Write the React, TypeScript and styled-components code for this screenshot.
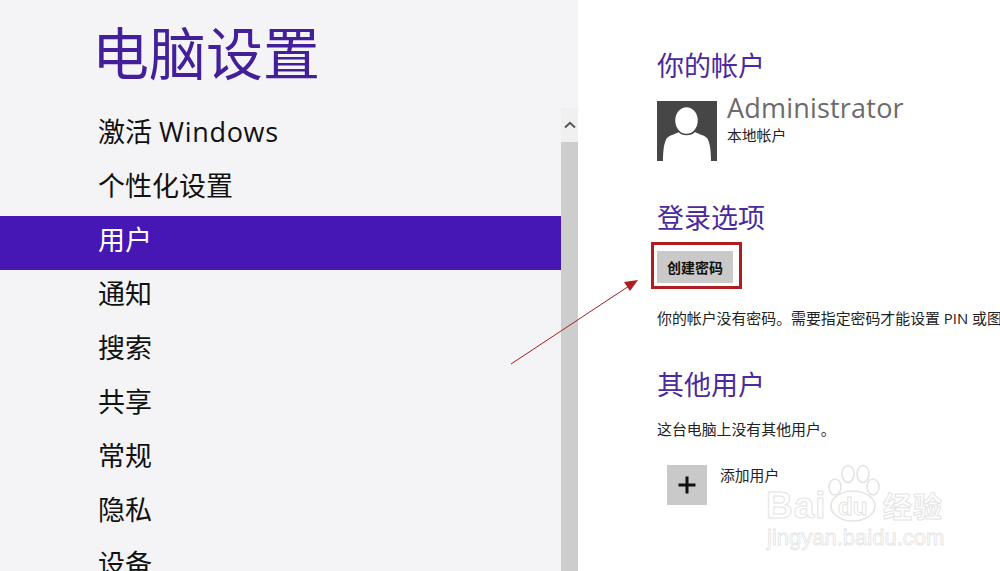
import React from "react";
import styled, { createGlobalStyle } from "styled-components";

const Global = createGlobalStyle`
  html, body { margin: 0; padding: 0; background: #fff; }
  body { font-family: "Open Sans", "Noto Sans CJK SC", sans-serif; }
  #root { width: 1000px; height: 571px; overflow: hidden; }
`;
const Page = styled.div`
  position: relative; display: flex; width: 1000px; height: 571px; overflow: hidden; background: #fff;
`;
const Sidebar = styled.aside`
  width: 578px; flex: none; height: 571px; background: #f4f4f6; display: flex; flex-direction: column; overflow: hidden;
`;
const Title = styled.h1`
  margin: 0; height: 108px; box-sizing: border-box; padding-left: 92px; font-size: 57px; line-height: 106px; font-weight: 400; color: #43209a;
`;
const NavArea = styled.div`display: flex; flex: 1; min-height: 0;`;
const NavList = styled.ul`
  list-style: none; margin: 0; padding: 0; width: 561px; flex: none;
`;
const NavItem = styled.li<{ $active?: boolean }>`
  height: 54px; padding-left: 98px; font-size: 27px; line-height: 48px; color: ${p => (p.$active ? "#fff" : "#111")};
  background: ${p => (p.$active ? "#4617b4" : "transparent")};
`;
const NavLatin = styled.span`letter-spacing: 0.7px;`;
const Scrollbar = styled.div`width: 17px; display: flex; flex-direction: column; background: #cdcdcd;`;
const ScrollUp = styled.div`height: 34px; background: #f0f0f1; display: flex; align-items: center; justify-content: center;`;
const Main = styled.main`flex: 1; padding: 49px 0 0 79px; min-width: 0; overflow: hidden; white-space: nowrap;`;
const Heading = styled.h2<{ $mt?: number }>`
  margin: ${p => p.$mt ?? 0}px 0 0; font-size: 27px; line-height: 34px; font-weight: 400; color: #4a2a9c;
`;
const Account = styled.div`display: flex; gap: 10px; margin-top: 18px;`;
const Avatar = styled.div`width: 60px; height: 60px; background: #464646; overflow: hidden; flex: none;`;
const AccountText = styled.div`display: flex; flex-direction: column; margin-top: -10px;`;
const AccountName = styled.div`font-size: 27px; line-height: 34px; color: #6b6b6b; letter-spacing: 0.2px;`;
const AccountType = styled.div`font-size: 14.8px; line-height: 20px; color: #222;`;
const Highlight = styled.div`
  margin: 7px 0 0 -6px; width: 91px; height: 47px; box-sizing: border-box; border: 3px solid #b01e22; padding: 6px 5px 0 3px;
`;
const PrimaryButton = styled.button`
  display: block; width: 76px; height: 32px; padding: 0; border: 0; background: #c9c9c9; font: 700 14px/32px "Noto Sans CJK SC", sans-serif; color: #111;
`;
const Body = styled.p<{ $mt: number }>`
  margin: ${p => p.$mt}px 0 0; font-size: 14.9px; line-height: 20px; color: #222;
`;
const AddRow = styled.div`display: flex; gap: 13px; margin: 26px 0 0 10px;`;
const AddTile = styled.div`width: 40px; height: 40px; background: #c9c9c9; display: flex; align-items: center; justify-content: center;`;
const AddLabel = styled.div`font-size: 14.8px; line-height: 20px; color: #222;`;
const ArrowOverlay = styled.svg`position: absolute; left: 505px; top: 274px; pointer-events: none;`;
const Watermark = styled.div`
  position: absolute; left: 766px; top: 463px; width: 190px; height: 90px; pointer-events: none; color: transparent; -webkit-text-stroke: 1px #e4e4e4;
`;
const WatermarkMain = styled.div`
  position: absolute; left: 0; top: 21px; font: 700 37px/44px "Liberation Sans", sans-serif; white-space: nowrap; letter-spacing: 1px;
`;
const WatermarkDu = styled.div`
  position: absolute; left: 72px; top: 30px; font: 700 24px/28px "Liberation Sans", sans-serif; white-space: nowrap;
`;
const WatermarkCn = styled.div`
  position: absolute; left: 117px; top: 23px; font: 700 29px/38px "Noto Sans CJK SC", sans-serif; white-space: nowrap; letter-spacing: 1px;
`;
const WatermarkUrl = styled.div`
  position: absolute; left: 1px; top: 62px; font: 400 22px/26px "Liberation Sans", sans-serif; white-space: nowrap; -webkit-text-stroke: 0.8px #e4e4e4;
`;
const Paw = styled.svg`position: absolute; left: 60px; top: 1px;`;

const items = ["个性化设置", "用户", "通知", "搜索", "共享", "常规", "隐私", "设备"];

export default function App() {
  return (
    <Page>
      <Global />
      <Sidebar>
        <Title>电脑设置</Title>
        <NavArea>
          <NavList>
            <NavItem>激活 <NavLatin>Windows</NavLatin></NavItem>
            {items.map(t => (
              <NavItem key={t} $active={t === "用户"}>{t}</NavItem>
            ))}
          </NavList>
          <Scrollbar>
            <ScrollUp>
              <svg width="12" height="8" viewBox="0 0 12 8">
                <path d="M1 6.5 L6 1.8 L11 6.5" fill="none" stroke="#555" strokeWidth="2" />
              </svg>
            </ScrollUp>
          </Scrollbar>
        </NavArea>
      </Sidebar>
      <Main>
        <Heading>你的帐户</Heading>
        <Account>
          <Avatar>
            <svg width="60" height="60" viewBox="0 0 60 60">
              <path d="M6 60 C6 50 7 41 10 37 C13 34 19 33 22 31 C25 35 35 35 38 31 C41 33 47 34 50 37 C53 41 54 50 54 60 Z" fill="#fff" />
              <ellipse cx="29.5" cy="19.5" rx="12" ry="14" fill="#fff" stroke="#464646" strokeWidth="1.5" />
            </svg>
          </Avatar>
          <AccountText>
            <AccountName>Administrator</AccountName>
            <AccountType>本地帐户</AccountType>
          </AccountText>
        </Account>
        <Heading $mt={40}>登录选项</Heading>
        <Highlight>
          <PrimaryButton>创建密码</PrimaryButton>
        </Highlight>
        <Body $mt={19}>你的帐户没有密码。需要指定密码才能设置 PIN 或图片密码。</Body>
        <Heading $mt={40}>其他用户</Heading>
        <Body $mt={17}>这台电脑上没有其他用户。</Body>
        <AddRow>
          <AddTile>
            <svg width="20" height="20" viewBox="0 0 20 20">
              <path d="M10 1.5 V18.5 M1.5 10 H18.5" stroke="#111" strokeWidth="3" />
            </svg>
          </AddTile>
          <AddLabel>添加用户</AddLabel>
        </AddRow>
      </Main>
      <ArrowOverlay width="140" height="96" viewBox="0 0 140 96">
        <path d="M6 90 L124 12" stroke="#a61e22" strokeWidth="1" fill="none" />
        <path d="M133 6 L119 8 L125 17 Z" fill="#b01e22" />
      </ArrowOverlay>
      <Watermark>
        <Paw width="56" height="60" viewBox="0 0 56 60">
          <g fill="#fff" stroke="#e4e4e4" strokeWidth="1.6">
            <ellipse cx="9" cy="23" rx="6" ry="8" />
            <ellipse cx="22" cy="10" rx="6" ry="8.5" />
            <ellipse cx="37" cy="10" rx="6" ry="8.5" />
            <ellipse cx="47" cy="23" rx="6" ry="8" />
            <ellipse cx="27" cy="42" rx="22" ry="15" />
          </g>
        </Paw>
        <WatermarkMain>Bai</WatermarkMain>
        <WatermarkDu>du</WatermarkDu>
        <WatermarkCn>经验</WatermarkCn>
        <WatermarkUrl>jingyan.baidu.com</WatermarkUrl>
      </Watermark>
    </Page>
  );
}
